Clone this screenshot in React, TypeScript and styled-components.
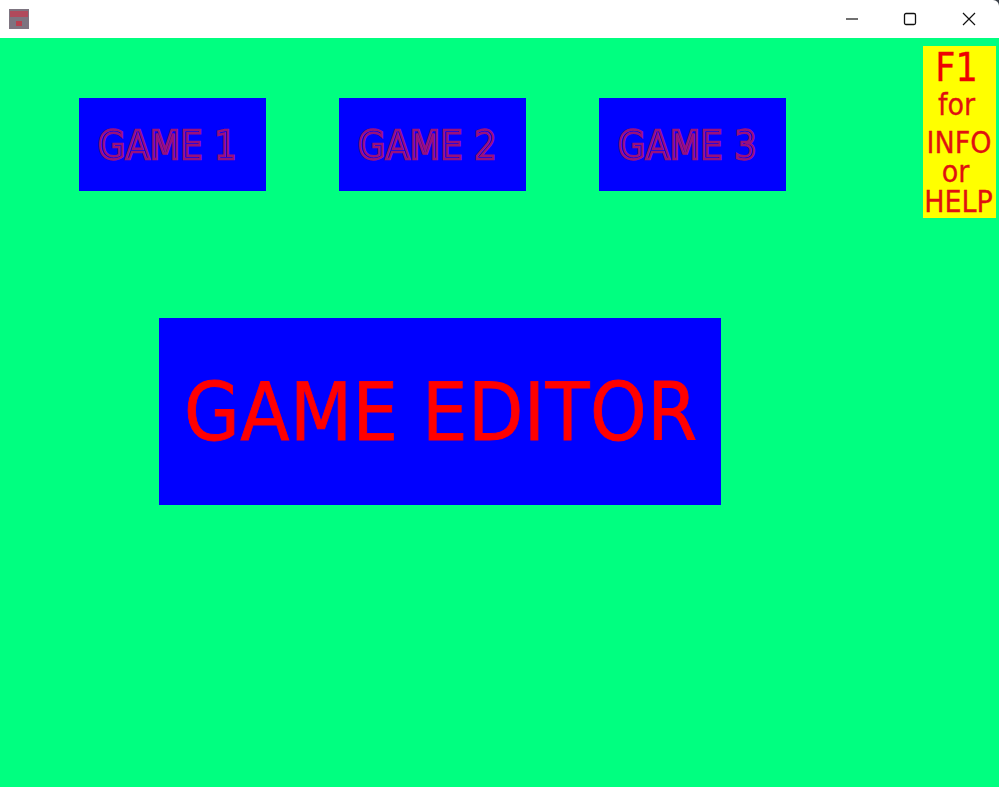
import React from 'react'
import styled, { createGlobalStyle } from 'styled-components'

const GlobalStyle = createGlobalStyle`
  html, body {
    margin: 0;
    padding: 0;
    background: #00ff80;
    overflow: hidden;
  }
`

const games = ['GAME 1', 'GAME 2', 'GAME 3']

const App = () => {
  return (
    <Window>
      <GlobalStyle />
      <TitleBar>
        <AppIcon>
          <svg width="20" height="20" viewBox="0 0 20 20">
            <rect width="20" height="20" fill="#7d7480" />
            <rect x="1" y="2" width="18" height="6" fill="#b04a5c" />
            <rect x="7" y="12" width="6" height="5" fill="#b8404f" />
          </svg>
        </AppIcon>
        <WindowControls>
          <ControlButton aria-label="Minimize">
            <svg width="14" height="14" viewBox="0 0 14 14">
              <path d="M1 7H13" stroke="#111" strokeWidth="1.2" fill="none" />
            </svg>
          </ControlButton>
          <ControlButton aria-label="Maximize">
            <svg width="14" height="14" viewBox="0 0 14 14">
              <rect x="1.5" y="1.5" width="11" height="11" rx="1.5" stroke="#111" strokeWidth="1.3" fill="none" />
            </svg>
          </ControlButton>
          <ControlButton aria-label="Close">
            <svg width="14" height="14" viewBox="0 0 14 14">
              <path d="M1 1L13 13M13 1L1 13" stroke="#111" strokeWidth="1.2" fill="none" />
            </svg>
          </ControlButton>
        </WindowControls>
      </TitleBar>
      <Field>
        <GameRow>
          {games.map((game) => (
            <GameButton key={game}>{game}</GameButton>
          ))}
        </GameRow>
        <EditorButton>GAME EDITOR</EditorButton>
        <HelpBox>
          <HelpKey>F1</HelpKey>
          <HelpWord $shift={6}>for</HelpWord>
          <HelpWord $gap={8} $shift={1}>INFO</HelpWord>
          <HelpWord $shift={8}>or</HelpWord>
          <HelpWord $shift={2}>HELP</HelpWord>
        </HelpBox>
      </Field>
    </Window>
  )
}

const Window = styled.div`
  width: 999px;
  height: 787px;
  display: flex;
  flex-direction: column;
  background: #00ff80;
  font-family: 'DejaVu Sans', 'Noto Sans', sans-serif;
  font-stretch: condensed;
`

const TitleBar = styled.div`
  height: 38px;
  flex: none;
  background: #fff;
  display: flex;
  align-items: center;
  justify-content: space-between;
  padding: 0 1px 0 9px;
  border-top-right-radius: 6px;
  box-shadow: 6px -6px 0 0 #3a3f48;
`

const AppIcon = styled.div`
  width: 20px;
  height: 20px;
  display: flex;
`

const WindowControls = styled.div`
  display: flex;
  align-items: center;
`

const ControlButton = styled.div`
  width: 58.5px;
  height: 38px;
  display: flex;
  align-items: center;
  justify-content: center;
`

const Field = styled.div`
  position: relative;
  flex: 1;
  padding: 60px 0 0 79px;
  background: #00ff80;
`

const GameRow = styled.div`
  display: flex;
  gap: 73px;
`

const GameButton = styled.div`
  width: 187px;
  height: 93px;
  box-sizing: border-box;
  padding: 2px 0 0 19px;
  background: #0000ff;
  display: flex;
  align-items: center;
  font-size: 39px;
  letter-spacing: 0.3px;
  color: #0000ff;
  -webkit-text-stroke: 2.4px #98107c;
  white-space: nowrap;
`

const EditorButton = styled.div`
  width: 562px;
  height: 187px;
  margin: 127px 0 0 80px;
  box-sizing: border-box;
  padding: 2px 0 0 25px;
  background: #0000ff;
  display: flex;
  align-items: center;
  font-size: 80px;
  letter-spacing: 0.5px;
  color: #ff0000;
  -webkit-text-stroke: 0.8px #ff0000;
  white-space: nowrap;
`

const HelpBox = styled.div`
  position: absolute;
  top: 8px;
  right: 3px;
  width: 73px;
  height: 172px;
  background: #ffff00;
  display: flex;
  flex-direction: column;
  align-items: center;
  color: #e01010;
  -webkit-text-stroke: 0.3px #e01010;
  line-height: 1;
`

const HelpKey = styled.div`
  font-size: 39px;
  line-height: 44px;
  color: #f00000;
  padding-right: 6px;
`

const HelpWord = styled.div<{ $gap?: number; $shift?: number }>`
  font-size: 30px;
  line-height: 29.5px;
  margin-top: ${(p) => p.$gap ?? 0}px;
  padding-right: ${(p) => p.$shift ?? 0}px;
`

export default App
